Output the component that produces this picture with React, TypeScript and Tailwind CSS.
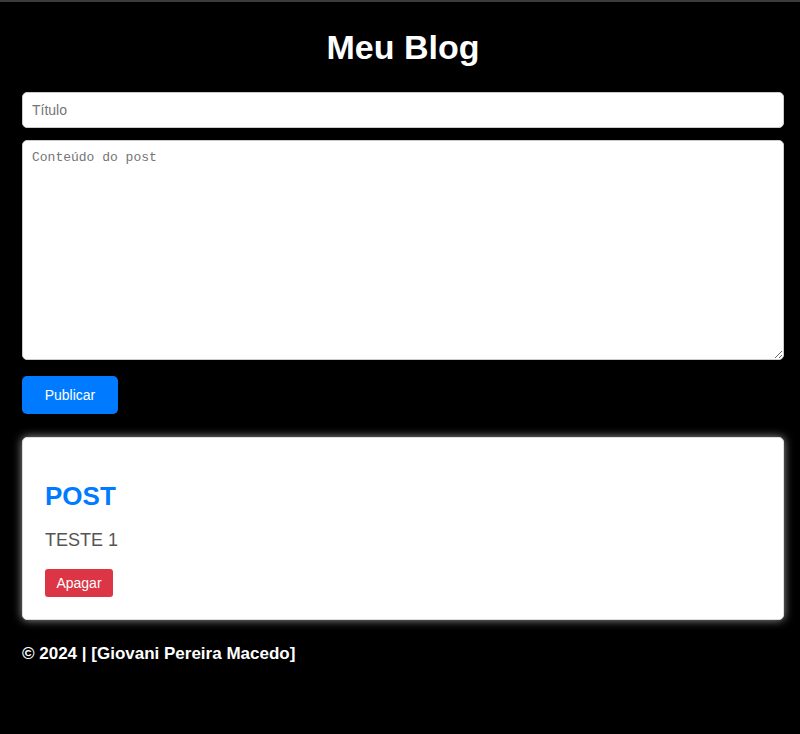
export default function App() {
  return (
    <div className="min-h-[734px] bg-black border-t-2 border-[#3c3c3c] font-['Liberation_Sans',Arial,sans-serif]">
      <div className="ml-[22px] w-[762px] flex flex-col">
        <h1 className="text-white text-[34px] font-bold text-center mt-[26px] mb-[25px] leading-[39px]">Meu Blog</h1>

        <input
          type="text"
          placeholder="Título"
          className="h-9 w-full rounded-[5px] border border-[#ccc] bg-white px-[9px] text-sm text-black placeholder:text-[#757575] outline-none"
        />
        <textarea
          placeholder="Conteúdo do post"
          className="mt-3 h-[220px] w-full rounded-[5px] border border-[#ccc] bg-white px-[9px] py-[9px] font-['Liberation_Mono',monospace] text-[13px] leading-[16px] text-black placeholder:text-[#757575] outline-none"
        />

        <div className="mt-4">
          <button className="h-[38px] w-24 rounded-[5px] bg-[#007bff] text-sm text-white">Publicar</button>
        </div>

        <div className="mt-[23px] rounded-[5px] border border-[#ddd] bg-white px-[22px] pt-[43px] pb-[22px] shadow-[0_0_10px_rgba(255,255,255,0.6)]">
          <h2 className="text-[26px] font-bold text-[#007bff] leading-[30px]">POST</h2>
          <p className="mt-[18px] text-lg text-[#555] leading-[22px]">TESTE 1</p>
          <button className="mt-[18px] h-[28px] w-[68px] rounded-[3px] bg-[#dc3545] text-sm text-white">Apagar</button>
        </div>

        <footer className="mt-[24px] text-white text-[17px] font-bold leading-[20px]">© 2024 | [Giovani Pereira Macedo]</footer>
      </div>
    </div>
  );
}
